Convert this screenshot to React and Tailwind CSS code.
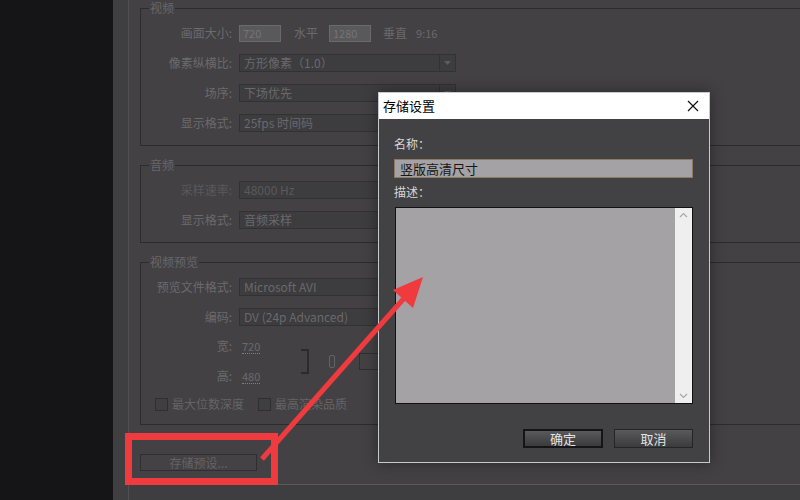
import React from "react";

const font = "font-['Noto_Sans_CJK_SC','Noto_Sans',sans-serif]";

const Label = ({ children, dim }) => (
  <span
    className={`w-[91px] shrink-0 text-right text-[12px] leading-[18px] ${
      dim ? "text-[#5a595c]" : "text-[#6b6a6d]"
    }`}
  >
    {children}
  </span>
);

const Select = ({ value, dim }) => (
  <div className="ml-[7px] flex h-[18px] w-[217px] border border-[#323134] bg-[#3d3c3f]">
    <span
      className={`flex-1 truncate px-[4px] text-[12px] leading-[16px] ${
        dim ? "text-[#5a595c]" : "text-[#6a696d]"
      }`}
    >
      {value}
    </span>
    <span className="flex w-[16px] items-center justify-center border-l border-[#323134]">
      <svg width="7" height="4" viewBox="0 0 7 4">
        <path d="M0 0h7L3.5 4z" fill="#5d5c60" />
      </svg>
    </span>
  </div>
);

const Group = ({ title, className = "", children }) => (
  <fieldset
    className={`w-[720px] shrink-0 border border-[#2c2b2e] px-0 ${className}`}
  >
    <legend className="ml-[8px] px-[1px] text-[12px] leading-[16px] text-[#68676a]">
      {title}
    </legend>
    {children}
  </fieldset>
);

const Check = ({ label }) => (
  <div className="flex items-center gap-[4px]">
    <span className="h-[13px] w-[13px] border border-[#2f2e31] bg-[#3f3e41]" />
    <span className="text-[12px] leading-[14px] text-[#656467]">{label}</span>
  </div>
);

export default function App() {
  return (
    <div
      className={`relative flex h-[500px] w-[800px] overflow-hidden bg-[#151417] ${font}`}
    >
      <div className="w-[113px] shrink-0 bg-[#151417]" />

      <div className="flex flex-1 bg-[#434144]">
        <div className="w-[16px] shrink-0 border-r border-[#504f52] bg-[#3f3e41]" />

        <div className="flex flex-1 flex-col overflow-hidden">
          <div className="flex h-[484px] flex-col pl-[11px]">
            <Group title="视频" className="pb-[13px] pt-[8px]">
              <div className="flex flex-col gap-[12px]">
                <div className="flex h-[18px] items-center">
                  <Label>画面大小:</Label>
                  <span className="ml-[7px] h-[17px] w-[42px] border border-[#6a696c] bg-[#59585b] px-[3px] text-[11px] leading-[15px] text-[#757478]">
                    720
                  </span>
                  <span className="ml-[13px] text-[12px] text-[#6b6a6d]">水平</span>
                  <span className="ml-[11px] h-[17px] w-[42px] border border-[#6a696c] bg-[#59585b] px-[3px] text-[11px] leading-[15px] text-[#757478]">
                    1280
                  </span>
                  <span className="ml-[12px] text-[12px] text-[#6b6a6d]">垂直</span>
                  <span className="ml-[9px] text-[11px] text-[#6b6a6d]">9:16</span>
                </div>
                <div className="flex h-[18px] items-center">
                  <Label>像素纵横比:</Label>
                  <Select value="方形像素（1.0）" />
                </div>
                <div className="flex h-[18px] items-center">
                  <Label>场序:</Label>
                  <Select value="下场优先" />
                </div>
                <div className="flex h-[18px] items-center">
                  <Label>显示格式:</Label>
                  <Select value="25fps 时间码" />
                </div>
              </div>
            </Group>

            <Group title="音频" className="mt-[11px] pb-[13px] pt-[8px]">
              <div className="flex flex-col gap-[12px]">
                <div className="flex h-[18px] items-center">
                  <Label dim>采样速率:</Label>
                  <Select value="48000 Hz" dim />
                </div>
                <div className="flex h-[18px] items-center">
                  <Label>显示格式:</Label>
                  <Select value="音频采样" />
                </div>
              </div>
            </Group>

            <Group title="视频预览" className="mt-[11px] pb-[13px] pt-[8px]">
              <div className="flex flex-col gap-[12px]">
                <div className="flex h-[18px] items-center">
                  <Label>预览文件格式:</Label>
                  <Select value="Microsoft AVI" />
                </div>
                <div className="flex h-[18px] items-center">
                  <Label>编码:</Label>
                  <Select value="DV (24p Advanced)" />
                </div>
              </div>

              <div className="mt-[11px] flex items-center">
                <div className="flex flex-col gap-[12px]">
                  <div className="flex h-[18px] items-center">
                    <Label>宽:</Label>
                    <span className="ml-[10px] border-b border-dotted border-[#807f82] text-[11px] leading-[14px] text-[#6b6a6d]">
                      720
                    </span>
                  </div>
                  <div className="flex h-[18px] items-center">
                    <Label>高:</Label>
                    <span className="ml-[10px] border-b border-dotted border-[#807f82] text-[11px] leading-[14px] text-[#6b6a6d]">
                      480
                    </span>
                  </div>
                </div>
                <div className="ml-[41px] h-[25px] w-[8px] border-y-[2px] border-r-[2px] border-[#2b2a2d]" />
                <div className="ml-[20px] h-[13px] w-[6px] rounded-[2px] border border-[#646366]" />
                <div className="ml-[24px] h-[17px] w-[30px] border border-[#2f2e31]" />
              </div>

              <div className="mt-[12px] flex items-center gap-[14px] pl-[14px]">
                <Check label="最大位数深度" />
                <Check label="最高渲染品质" />
              </div>
            </Group>

            <button className="mt-[29px] h-[17px] w-[117px] border border-[#2f2e31] bg-[#444245] text-[12px] leading-[15px] text-[#646366]">
              存储预设...
            </button>
          </div>
          <div className="flex-1 border-t border-[#59585b] bg-[#3e3d40]" />
        </div>
      </div>

      {/* dialog */}
      <div className="absolute left-[378px] top-[92px] flex h-[371px] w-[332px] flex-col border border-[#c6cad0] bg-[#424144] shadow-[0_0_14px_rgba(0,0,0,0.4)]">
        <div className="flex h-[26px] items-center justify-between bg-white pl-[4px] pr-[10px]">
          <span className="text-[13px] text-black">存储设置</span>
          <svg width="12" height="12" viewBox="0 0 12 12">
            <path d="M1 1l10 10M11 1L1 11" stroke="#111" strokeWidth="1.2" />
          </svg>
        </div>
        <div className="flex flex-1 flex-col px-[15px] pt-[18px]">
          <span className="text-[12px] leading-[14px] text-[#d8d8d8]">名称：</span>
          <div className="mt-[8px] h-[19px] w-[299px] border border-[#8c7a66] bg-[#a4a2a5] px-[5px] text-[13px] leading-[17px] text-[#161616]">
            竖版高清尺寸
          </div>
          <span className="mt-[7px] text-[12px] leading-[14px] text-[#d8d8d8]">描述：</span>
          <div className="ml-[1px] mt-[8px] flex h-[197px] w-[298px] border border-[#111] bg-[#a4a2a5]">
            <div className="flex-1" />
            <div className="flex w-[17px] flex-col items-center justify-between bg-[#efefef] py-[4px]">
              <svg width="9" height="6" viewBox="0 0 9 6">
                <path d="M1 5l3.5-3.5L8 5" fill="none" stroke="#a8a8a8" strokeWidth="1.2" />
              </svg>
              <svg width="9" height="6" viewBox="0 0 9 6">
                <path d="M1 1l3.5 3.5L8 1" fill="none" stroke="#a8a8a8" strokeWidth="1.2" />
              </svg>
            </div>
          </div>
          <div className="mt-[25px] flex justify-end gap-[11px] pr-[1px]">
            <button className="h-[19px] w-[80px] border-2 border-[#151515] bg-gradient-to-b from-[#5a595c] to-[#3b3a3d] text-[13px] leading-[15px] text-[#e4e4e4]">
              确定
            </button>
            <button className="h-[19px] w-[79px] border border-[#252427] bg-gradient-to-b from-[#5a595c] to-[#3b3a3d] text-[13px] leading-[17px] text-[#e4e4e4]">
              取消
            </button>
          </div>
        </div>
      </div>

      {/* red annotation */}
      <div className="absolute left-[125px] top-[433px] h-[52px] w-[153px] border-[7px] border-[#ef3b3d]" />
      <svg
        className="pointer-events-none absolute left-0 top-0"
        width="800"
        height="500"
        viewBox="0 0 800 500"
      >
        <line x1="262" y1="459" x2="406" y2="296" stroke="#ef3b3d" strokeWidth="5" />
        <polygon points="423,277 413,308 393,290" fill="#ef3b3d" />
      </svg>
    </div>
  );
}
